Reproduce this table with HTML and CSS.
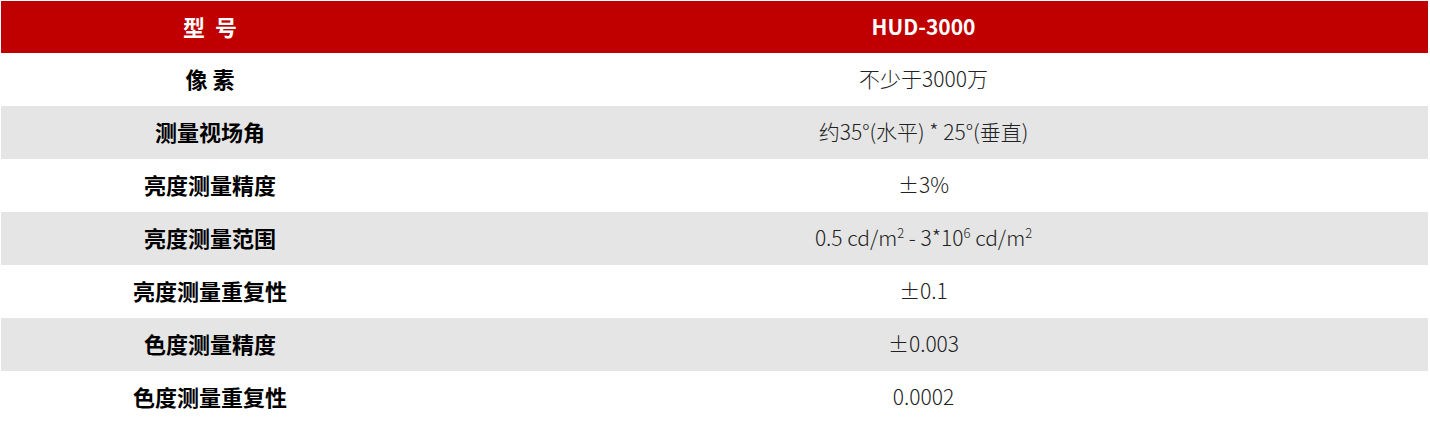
FILE: index.html
```html
<!DOCTYPE html>
<html lang="zh-CN">
<head>
<meta charset="utf-8">
<link rel="stylesheet" href="styles.css">
</head>
<body>
<table class="spec">
  <thead>
    <tr class="head"><th class="k">型&nbsp;&nbsp;号</th><th class="v">HUD-3000</th></tr>
  </thead>
  <tbody>
    <tr><td class="k">像 素</td><td class="v">不少于3000万</td></tr>
    <tr class="alt"><td class="k">测量视场角</td><td class="v">约35°(水平) * 25°(垂直)</td></tr>
    <tr><td class="k">亮度测量精度</td><td class="v">±3%</td></tr>
    <tr class="alt"><td class="k">亮度测量范围</td><td class="v">0.5 cd/m<sup>2</sup> - 3*10<sup>6</sup> cd/m<sup>2</sup></td></tr>
    <tr><td class="k">亮度测量重复性</td><td class="v">±0.1</td></tr>
    <tr class="alt"><td class="k">色度测量精度</td><td class="v">±0.003</td></tr>
    <tr><td class="k">色度测量重复性</td><td class="v">0.0002</td></tr>
  </tbody>
</table>
</body>
</html>
```

FILE: styles.css
```css
html, body {
  margin: 0;
  padding: 0;
  background: #ffffff;
}
body {
  padding: 1px;
  font-family: "Noto Sans CJK SC", "Noto Sans", sans-serif;
}
.spec {
  width: 1427px;
  border-collapse: collapse;
  table-layout: fixed;
}
.spec th, .spec td {
  height: 53px;
  padding: 0 0 3px 0;
  box-sizing: border-box;
  text-align: center;
  vertical-align: middle;
}
.spec .k {
  width: 418px;
  font-size: 22px;
  font-weight: 600;
  color: #000000;
}
.spec .v {
  font-size: 21px;
  font-weight: 300;
  color: #222222;
}
.spec .head th {
  height: 52px;
  background: #c00000;
  color: #ffffff;
  font-size: 21px;
  font-weight: 700;
}
.spec .head .k {
  font-size: 22px;
}
.alt td {
  background: #e5e5e5;
}
.spec sup {
  font-size: 13px;
  line-height: 0;
  vertical-align: 8px;
}
```
